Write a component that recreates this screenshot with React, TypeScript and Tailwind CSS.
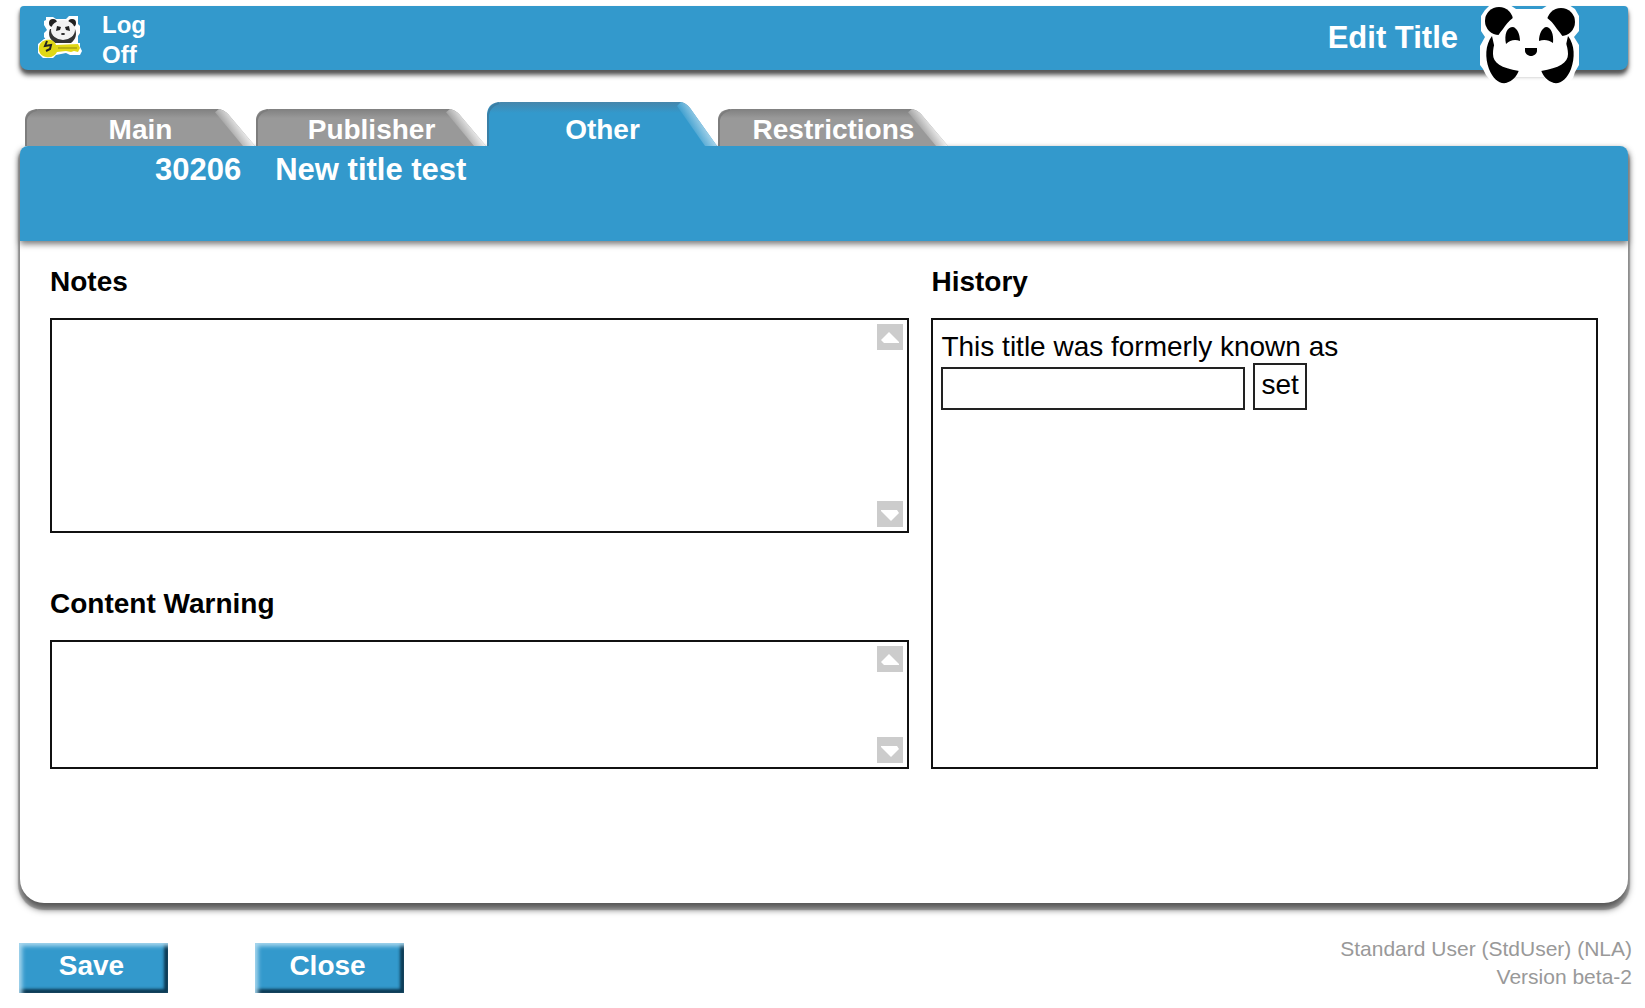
/**
 * App.tsx: "Edit Title" screen, Other tab.
 *
 * Holds the free-text notes, the content warning and the title history.
 */
import { useRef, useState } from "react";

// ─── Types ───────────────────────────────────────────────────────────────────

type TabId = "main" | "publisher" | "other" | "restrictions";

const TABS: { id: TabId; label: string }[] = [
  { id: "main", label: "Main" },
  { id: "publisher", label: "Publisher" },
  { id: "other", label: "Other" },
  { id: "restrictions", label: "Restrictions" },
];

// ─── Icons ───────────────────────────────────────────────────────────────────

/** Panda head with a white halo. */
function PandaLogo({ className }: { className: string }) {
  return (
    <svg viewBox="6 2 100 84" className={className} aria-hidden="true">
      <path
        d="M7 16L11 10L16 5H36L42 9H68L74 5H95L101 9L105 16V31L100 37L105 45V65L101 72L99 78L94 83L86 86H76L70 77H41L36 84L24 86L17 81L12 75L9 69L6 65V46L11 37L7 31Z"
        fill="#fff"
      />
      <ellipse cx="25" cy="21" rx="14" ry="14" fill="#000" />
      <ellipse cx="87" cy="22" rx="14" ry="14" fill="#000" />
      <path d="M18 36C11 45 11 58 15 69C19 79 25 84 32 83C39 81 43 76 45 70L50 60L20 45Z" fill="#000" />
      <path d="M94 36C101 45 101 58 97 69C93 79 87 84 80 83C73 81 69 76 67 70L62 60L92 45Z" fill="#000" />
      <path
        d="M56 11C45 12 35 19 29 29C22 37 19 45 19 54C19 63 27 68 45 71H67C85 68 94 63 94 54C94 45 90 37 83 29C77 19 67 12 56 11Z"
        fill="#fff"
      />
      <path d="M32 44C30 34 33 27 39 27C43 28 46 34 46 41C41 39 36 40 32 44Z" fill="#000" />
      <path d="M65 41C65 34 68 28 72 27C77 27 80 34 79 43C75 40 70 39 65 41Z" fill="#000" />
      <path d="M51 48H63V51C63 54 59 56 57 56C55 56 51 54 51 51Z" fill="#000" />
    </svg>
  );
}

/** Small panda holding a yellow key. */
function LogOffIcon() {
  return (
    <svg viewBox="0 0 44 44" className="mt-0.5 h-11 w-11" aria-hidden="true">
      <path d="M8 1H15L18 3H28L31 0H40V8L42 10V17L40 20V27H10L6 21V17L9 14L6 9V5L8 4Z" fill="#fff" />
      <path d="M0 28L6 23H16L20 27H42V31L44 35L42 39H32L28 37L18 39L15 42H5L0 37Z" fill="#fff" />
      <circle cx="15" cy="7" r="4" fill="#222" />
      <circle cx="34" cy="7" r="4" fill="#222" />
      <path d="M12 13C10 18 11 23 17 27H33C38 23 39 18 37 13Z" fill="#333" />
      <ellipse cx="25" cy="14" rx="12" ry="10" fill="#f2f2f2" />
      <path d="M18 15L19 10L23 11L22 14Z" fill="#222" />
      <path d="M32 15L31 10L27 11L28 14Z" fill="#222" />
      <ellipse cx="25" cy="18" rx="2" ry="1" fill="#222" />
      <path
        d="M8 24C13 23 17 25 18 29L40 28L42 32L40 36L36 35L33 36L28 35L19 36C17 40 13 42 8 41C3 40 0 36 1 31C2 27 4 25 8 24Z"
        fill="#e0d816"
      />
      <path d="M9 25L7 30L13 29L12 33L8 35" fill="none" stroke="#222" strokeWidth="2" />
      <path d="M20 32H39" stroke="#8f8912" strokeWidth="1" />
    </svg>
  );
}

// ─── Sub-components ──────────────────────────────────────────────────────────

/** A folder tab with a slanted right edge. */
function Tab({
  label,
  active,
  onSelect,
}: {
  label: string;
  active: boolean;
  onSelect: () => void;
}) {
  return (
    <button
      type="button"
      role="tab"
      aria-selected={active}
      onClick={onSelect}
      className={[
        "relative w-[231px] text-center text-[28px] leading-8 font-bold text-white",
        active ? "h-11 pt-3" : "h-[37px] pt-1",
      ].join(" ")}
    >
      <svg
        viewBox="0 0 231 44"
        preserveAspectRatio="none"
        className="absolute inset-0 h-full w-full"
        aria-hidden="true"
      >
        <defs>
          <linearGradient id={`edge-${label}`} x1="0" y1="0" x2="0" y2="1">
            <stop offset="0" stopColor={active ? "#4686ab" : "#808080"} />
            <stop offset="0.25" stopColor={active ? "#3399cc" : "#999999"} />
          </linearGradient>
          <linearGradient
            id={`slant-${label}`}
            gradientUnits="userSpaceOnUse"
            x1="202"
            y1="28"
            x2="216"
            y2="20"
          >
            <stop offset="0" stopColor={active ? "#3399cc" : "#999999"} />
            <stop offset="1" stopColor={active ? "#a5d2e9" : "#eeeeee"} />
          </linearGradient>
        </defs>
        <path d="M0 44V12Q1 0 14 0H194Q199 1 203 6L230 44Z" fill={`url(#edge-${label})`} />
        <path d="M194 0Q199 1 203 6L230 44H218L190 4Z" fill={`url(#slant-${label})`} />
        <path d="M1 44V13Q2 4 12 1" fill="none" stroke={active ? "#3a7fa6" : "#7d7d7d"} strokeWidth="2" />
      </svg>
      <span className="relative">{label}</span>
    </button>
  );
}

/** Square grey scroll button. */
function ScrollButton({
  direction,
  label,
  onClick,
}: {
  direction: "up" | "down";
  label: string;
  onClick: () => void;
}) {
  return (
    <button type="button" aria-label={label} onClick={onClick} className="h-[26px] w-[26px] bg-[#cccccc]">
      <svg viewBox="0 0 26 26" className="h-full w-full" aria-hidden="true">
        <path d={direction === "up" ? "M12 8L22 18V19H7L4 16Z" : "M4 9H20L22 12L14 20L4 10Z"} fill="#fff" />
      </svg>
    </button>
  );
}

/** Labelled text area with its own scroll buttons. */
function ScrollArea({
  id,
  label,
  heightClass,
}: {
  id: string;
  label: string;
  heightClass: string;
}) {
  const ref = useRef<HTMLTextAreaElement>(null);
  const scroll = (top: number) => ref.current?.scrollBy({ top });

  return (
    <div>
      <label htmlFor={id} className="block text-[28px] leading-8 font-bold">
        {label}
      </label>
      <div className={["mt-5 flex border-2 border-[#111111] p-1", heightClass].join(" ")}>
        <textarea
          id={id}
          ref={ref}
          className="min-w-0 flex-1 resize-none overflow-hidden px-1 text-[28px] leading-8 outline-none"
        />
        <div className="flex flex-col justify-between">
          <ScrollButton direction="up" label={`Scroll ${label} up`} onClick={() => scroll(-32)} />
          <ScrollButton direction="down" label={`Scroll ${label} down`} onClick={() => scroll(32)} />
        </div>
      </div>
    </div>
  );
}

/** Bevelled blue action button. */
function ActionButton({ label }: { label: string }) {
  return (
    <button
      type="button"
      className="h-[50px] w-[149px] bg-[#3399cc] pr-1 pb-1 text-[28px] leading-8 font-bold text-white shadow-[inset_3px_3px_4px_#a9d7ee,inset_-4px_-4px_3px_#0c3a54]"
    >
      {label}
    </button>
  );
}

// ─── Main component ──────────────────────────────────────────────────────────

export default function App() {
  const [tab, setTab] = useState<TabId>("other");
  const [formerTitle, setFormerTitle] = useState("");

  return (
    <div className="min-h-screen bg-white pt-1.5 pr-[17px] pl-5 font-['Liberation_Sans',Arial,sans-serif] text-black">
      {/* ── Header bar ──────────────────────────────────────────────────── */}
      <header className="flex h-16 items-start justify-between rounded-t-sm rounded-b-lg bg-[#3399cc] pr-12 pl-[18px] shadow-[0_5px_5px_#555555,0_2px_2px_1px_#cccccc]">
        <a href="#logoff" className="flex gap-5 pt-2 text-2xl leading-[30px] font-bold text-white">
          <LogOffIcon />
          <span className="-mt-1 w-12">Log Off</span>
        </a>
        <div className="flex items-start gap-[22px]">
          <h1 className="pt-4 text-[31px] leading-8 font-bold text-white">Edit Title</h1>
          <PandaLogo className="-mt-1 h-[84px] w-[100px]" />
        </div>
      </header>

      {/* ── Tabs ────────────────────────────────────────────────────────── */}
      <div role="tablist" className="mt-8 flex items-end pl-[5px]">
        {TABS.map((t) => (
          <Tab key={t.id} label={t.label} active={t.id === tab} onSelect={() => setTab(t.id)} />
        ))}
      </div>

      {/* ── Panel ───────────────────────────────────────────────────────── */}
      <main className="rounded-t-lg rounded-b-3xl bg-white shadow-[0_6px_7px_#555555,0_5px_1px_2px_#bbbbbb]">
        <div className="flex h-[95px] gap-[34px] rounded-t-lg bg-[#3399cc] pt-2 pl-[135px] text-[31px] leading-8 font-bold text-white shadow-[0_3px_6px_#777777]">
          <span>30206</span>
          <h2>New title test</h2>
        </div>

        <div className="grid grid-cols-[860fr_667fr] gap-[22px] px-[30px] pt-[25px] pb-[134px]">
          <div className="flex flex-col justify-between">
            <ScrollArea id="notes" label="Notes" heightClass="h-[215px]" />
            <ScrollArea id="content-warning" label="Content Warning" heightClass="h-[129px]" />
          </div>

          <section className="flex flex-col">
            <h3 className="text-[28px] leading-8 font-bold">History</h3>
            <form
              onSubmit={(e) => e.preventDefault()}
              className="mt-5 h-[451px] border-2 border-[#111111] px-2 pt-[11px] text-[28px] leading-8"
            >
              <label htmlFor="former-title" className="block">
                This title was formerly known as
              </label>
              <div className="flex items-end gap-2">
                <input
                  id="former-title"
                  value={formerTitle}
                  onChange={(e) => setFormerTitle(e.target.value)}
                  className="h-[43px] w-[304px] border-2 border-[#222222] px-1 outline-none"
                />
                <button type="submit" className="h-[47px] border-2 border-[#222222] px-1.5 pb-1">
                  set
                </button>
              </div>
            </form>
          </section>
        </div>
      </main>

      {/* ── Footer ──────────────────────────────────────────────────────── */}
      <footer className="-mr-1 -ml-px flex items-start justify-between pt-10">
        <div className="flex gap-[87px]">
          <ActionButton label="Save" />
          <ActionButton label="Close" />
        </div>
        <p className="-mt-2 text-right text-[21px] leading-7 text-[#999999]">
          Standard User (StdUser) (NLA)
          <br />
          Version beta-2
        </p>
      </footer>
    </div>
  );
}
